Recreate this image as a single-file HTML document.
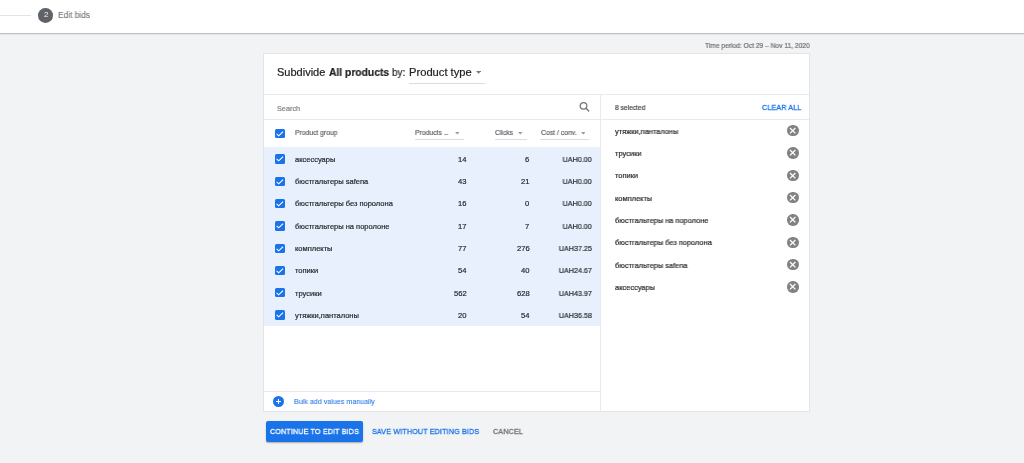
<!DOCTYPE html>
<html><head><meta charset="utf-8">
<style>
*{margin:0;padding:0;box-sizing:border-box}
html,body{width:1024px;height:463px;overflow:hidden}
body{background:#f1f3f4;font-family:"Liberation Sans",sans-serif;position:relative;color:#3c4043}
.a{position:absolute;white-space:nowrap;line-height:1;-webkit-text-stroke:0.2px currentColor}
.tx{will-change:transform}
.cb{width:9.6px;height:9.3px;background:#1a73e8;border-radius:1.5px}
.arr{width:0;height:0;border-left:2.5px solid transparent;border-right:2.5px solid transparent;border-top:2.5px solid #80868b}
.x{width:11.4px;height:11.4px;border-radius:50%;background:#828282}
</style></head><body>
<div class="a" style="left:0;top:0;width:1024px;height:33px;background:#fff"></div>
<div class="a" style="left:0;top:33px;width:1024px;height:1px;background:#bfc1c5"></div>
<div class="a" style="left:0;top:34px;width:1024px;height:1px;background:#e4e6e8"></div>
<div class="a" style="left:0;top:15px;width:31px;height:1px;background:#e1e3e6"></div>
<div class="a" style="left:38px;top:8px;width:14.6px;height:14.6px;border-radius:50%;background:#5f6368"></div>
<div class="a" style="left:263px;top:53px;width:547px;height:359px;background:#fff;border:1px solid #e2e4e7"></div>
<div class="a" style="left:264px;top:94px;width:545px;height:1px;background:#e8eaed"></div>
<div class="a" style="left:264px;top:119px;width:545px;height:1px;background:#e8eaed"></div>
<div class="a" style="left:600px;top:95px;width:1px;height:316px;background:#e8eaed"></div>
<div class="a" style="left:264px;top:391px;width:336px;height:1px;background:#e8eaed"></div>
<svg class="a" style="left:475.80px;top:70.80px" width="5.20" height="2.80" viewBox="0 0 5.20 2.80"><path d="M0 0 L5.20 0 L2.60 2.80 Z" fill="#777b80"/></svg>
<div class="a" style="left:409px;top:83px;width:76px;height:1px;background:#dadce0"></div>
<svg class="a" style="left:572px;top:96px" width="24" height="22" viewBox="0 0 24 22"><circle cx="11.5" cy="9.85" r="3.35" stroke="#72767b" stroke-width="1.25" fill="none"/><path d="M14 12.35 L16.7 15.05" stroke="#72767b" stroke-width="1.35" stroke-linecap="round"/></svg>
<div class="a cb" style="left:275px;top:128.6px"><svg width="9.6" height="9.4" viewBox="0 0 9.6 9.4" style="position:absolute;left:0;top:0"><path d="M1.6 4.85 L3.7 6.8 L8.1 2.55" stroke="#fff" stroke-width="1.1" fill="none"/></svg></div>
<svg class="a" style="left:455.30px;top:132.05px" width="4.60" height="2.50" viewBox="0 0 4.60 2.50"><path d="M0 0 L4.60 0 L2.30 2.50 Z" fill="#989ca1"/></svg>
<div class="a" style="left:415px;top:139px;width:49px;height:1px;background:#dadce0"></div>
<svg class="a" style="left:518.10px;top:132.05px" width="4.60" height="2.50" viewBox="0 0 4.60 2.50"><path d="M0 0 L4.60 0 L2.30 2.50 Z" fill="#989ca1"/></svg>
<div class="a" style="left:495px;top:139px;width:32px;height:1px;background:#dadce0"></div>
<svg class="a" style="left:580.50px;top:132.05px" width="4.60" height="2.50" viewBox="0 0 4.60 2.50"><path d="M0 0 L4.60 0 L2.30 2.50 Z" fill="#989ca1"/></svg>
<div class="a" style="left:540px;top:139px;width:49px;height:1px;background:#dadce0"></div>
<div class="a" style="left:264px;top:147px;width:336px;height:178.6px;background:#e8f0fe"></div>
<div class="a cb" style="left:275px;top:154.30px"><svg width="9.6" height="9.4" viewBox="0 0 9.6 9.4" style="position:absolute;left:0;top:0"><path d="M1.6 4.85 L3.7 6.8 L8.1 2.55" stroke="#fff" stroke-width="1.1" fill="none"/></svg></div>
<div class="a cb" style="left:275px;top:176.61px"><svg width="9.6" height="9.4" viewBox="0 0 9.6 9.4" style="position:absolute;left:0;top:0"><path d="M1.6 4.85 L3.7 6.8 L8.1 2.55" stroke="#fff" stroke-width="1.1" fill="none"/></svg></div>
<div class="a cb" style="left:275px;top:198.92px"><svg width="9.6" height="9.4" viewBox="0 0 9.6 9.4" style="position:absolute;left:0;top:0"><path d="M1.6 4.85 L3.7 6.8 L8.1 2.55" stroke="#fff" stroke-width="1.1" fill="none"/></svg></div>
<div class="a cb" style="left:275px;top:221.23px"><svg width="9.6" height="9.4" viewBox="0 0 9.6 9.4" style="position:absolute;left:0;top:0"><path d="M1.6 4.85 L3.7 6.8 L8.1 2.55" stroke="#fff" stroke-width="1.1" fill="none"/></svg></div>
<div class="a cb" style="left:275px;top:243.54px"><svg width="9.6" height="9.4" viewBox="0 0 9.6 9.4" style="position:absolute;left:0;top:0"><path d="M1.6 4.85 L3.7 6.8 L8.1 2.55" stroke="#fff" stroke-width="1.1" fill="none"/></svg></div>
<div class="a cb" style="left:275px;top:265.85px"><svg width="9.6" height="9.4" viewBox="0 0 9.6 9.4" style="position:absolute;left:0;top:0"><path d="M1.6 4.85 L3.7 6.8 L8.1 2.55" stroke="#fff" stroke-width="1.1" fill="none"/></svg></div>
<div class="a cb" style="left:275px;top:288.16px"><svg width="9.6" height="9.4" viewBox="0 0 9.6 9.4" style="position:absolute;left:0;top:0"><path d="M1.6 4.85 L3.7 6.8 L8.1 2.55" stroke="#fff" stroke-width="1.1" fill="none"/></svg></div>
<div class="a cb" style="left:275px;top:310.47px"><svg width="9.6" height="9.4" viewBox="0 0 9.6 9.4" style="position:absolute;left:0;top:0"><path d="M1.6 4.85 L3.7 6.8 L8.1 2.55" stroke="#fff" stroke-width="1.1" fill="none"/></svg></div>
<div class="a x" style="left:787.4px;top:125.10px"><svg width="11.4" height="11.4" viewBox="0 0 11.4 11.4" style="position:absolute;left:0;top:0"><path d="M3.0 3.0 L8.4 8.4 M8.4 3.0 L3.0 8.4" stroke="#fff" stroke-width="1.25"/></svg></div>
<div class="a x" style="left:787.4px;top:147.41px"><svg width="11.4" height="11.4" viewBox="0 0 11.4 11.4" style="position:absolute;left:0;top:0"><path d="M3.0 3.0 L8.4 8.4 M8.4 3.0 L3.0 8.4" stroke="#fff" stroke-width="1.25"/></svg></div>
<div class="a x" style="left:787.4px;top:169.72px"><svg width="11.4" height="11.4" viewBox="0 0 11.4 11.4" style="position:absolute;left:0;top:0"><path d="M3.0 3.0 L8.4 8.4 M8.4 3.0 L3.0 8.4" stroke="#fff" stroke-width="1.25"/></svg></div>
<div class="a x" style="left:787.4px;top:192.03px"><svg width="11.4" height="11.4" viewBox="0 0 11.4 11.4" style="position:absolute;left:0;top:0"><path d="M3.0 3.0 L8.4 8.4 M8.4 3.0 L3.0 8.4" stroke="#fff" stroke-width="1.25"/></svg></div>
<div class="a x" style="left:787.4px;top:214.34px"><svg width="11.4" height="11.4" viewBox="0 0 11.4 11.4" style="position:absolute;left:0;top:0"><path d="M3.0 3.0 L8.4 8.4 M8.4 3.0 L3.0 8.4" stroke="#fff" stroke-width="1.25"/></svg></div>
<div class="a x" style="left:787.4px;top:236.65px"><svg width="11.4" height="11.4" viewBox="0 0 11.4 11.4" style="position:absolute;left:0;top:0"><path d="M3.0 3.0 L8.4 8.4 M8.4 3.0 L3.0 8.4" stroke="#fff" stroke-width="1.25"/></svg></div>
<div class="a x" style="left:787.4px;top:258.96px"><svg width="11.4" height="11.4" viewBox="0 0 11.4 11.4" style="position:absolute;left:0;top:0"><path d="M3.0 3.0 L8.4 8.4 M8.4 3.0 L3.0 8.4" stroke="#fff" stroke-width="1.25"/></svg></div>
<div class="a x" style="left:787.4px;top:281.27px"><svg width="11.4" height="11.4" viewBox="0 0 11.4 11.4" style="position:absolute;left:0;top:0"><path d="M3.0 3.0 L8.4 8.4 M8.4 3.0 L3.0 8.4" stroke="#fff" stroke-width="1.25"/></svg></div>
<div class="a" style="left:272.8px;top:395.9px;width:11.5px;height:11.5px;border-radius:50%;background:#1a73e8"></div>
<div class="a" style="left:275.95px;top:401.05px;width:5.2px;height:1.2px;background:#fff"></div>
<div class="a" style="left:277.95px;top:399.05px;width:1.2px;height:5.2px;background:#fff"></div>
<div class="a" style="left:265.5px;top:421.1px;width:97.4px;height:20.9px;background:#1a73e8;border-radius:2px;box-shadow:0 1px 1.5px rgba(0,0,0,.3)"></div>
<div class="a tx" id="two" style="left:43.5px;top:10.9px;font-size:8px;color:#f4f4f4;-webkit-text-stroke:0">2</div>
<div class="a tx" id="edit" style="left:57.8px;top:11.2px;font-size:8.6px;color:#6f7378;-webkit-text-stroke:0.1px;transform:scaleX(0.97);transform-origin:0 0">Edit bids</div>
<div class="a tx" id="time" style="left:705px;top:41.6px;font-size:7px;color:#6b6f74;transform:scaleX(0.951);transform-origin:0 0">Time period: Oct 29 – Nov 11, 2020</div>
<div class="a tx" id="subdivide" style="left:276.8px;top:67px;font-size:10.8px;color:#202124;transform:scaleX(1.02);transform-origin:0 0">Subdivide</div>
<div class="a tx" id="all" style="left:329px;top:67px;font-size:10.8px;font-weight:bold;color:#202124;transform:scaleX(0.953);transform-origin:0 0">All products</div>
<div class="a tx" id="by" style="left:392px;top:67px;font-size:10.8px;color:#202124;transform:scaleX(0.92);transform-origin:0 0">by:</div>
<div class="a tx" id="ptype" style="left:408.8px;top:67px;font-size:10.8px;color:#202124;transform:scaleX(1.035);transform-origin:0 0">Product type</div>
<div class="a tx" id="search" style="left:277.3px;top:104.5px;font-size:7.3px;color:#80868b;transform:scaleX(1.0);transform-origin:0 0">Search</div>
<div class="a tx" id="sel8" style="left:614.8px;top:103.6px;font-size:7.2px;color:#3c4043;transform:scaleX(0.925);transform-origin:0 0">8 selected</div>
<div class="a tx" id="clear" style="left:762px;top:103.8px;font-size:7.6px;color:#1a73e8;-webkit-text-stroke:0.3px;letter-spacing:0.15px;transform:scaleX(0.94);transform-origin:0 0">CLEAR ALL</div>
<div class="a tx" id="pg" style="left:295px;top:129.3px;font-size:7.2px;color:#5f6368;transform:scaleX(0.94);transform-origin:0 0">Product group</div>
<div class="a tx" id="prodh" style="left:415px;top:129.4px;font-size:7.2px;color:#5f6368;transform:scaleX(0.95);transform-origin:0 0">Products <span style="letter-spacing:-.6px">...</span></div>
<div class="a tx" id="clicksh" style="left:495px;top:129.4px;font-size:7.2px;color:#5f6368;transform:scaleX(0.94);transform-origin:0 0">Clicks</div>
<div class="a tx" id="costh" style="left:541px;top:129.4px;font-size:7.2px;color:#5f6368;transform:scaleX(0.955);transform-origin:0 0">Cost / conv.</div>
<div class="a tx" id="r0" style="left:295px;top:155.7px;font-size:7.5px;color:#26292d">аксессуары</div>
<div class="a tx" id="n0" style="top:155.7px;font-size:7.6px;color:#26292d;right:557.50px">14</div>
<div class="a tx" id="c0" style="top:155.7px;font-size:7.6px;color:#26292d;right:494.70px">6</div>
<div class="a tx" id="u0" style="top:155.7px;font-size:7.6px;color:#26292d;right:432.20px;transform:scaleX(0.95);transform-origin:100% 0">UAH0.00</div>
<div class="a tx" id="r1" style="left:295px;top:178.01px;font-size:7.5px;color:#26292d">бюстгальтеры safena</div>
<div class="a tx" id="n1" style="top:178.01px;font-size:7.6px;color:#26292d;right:557.50px">43</div>
<div class="a tx" id="c1" style="top:178.01px;font-size:7.6px;color:#26292d;right:494.70px">21</div>
<div class="a tx" id="u1" style="top:178.01px;font-size:7.6px;color:#26292d;right:432.20px;transform:scaleX(0.95);transform-origin:100% 0">UAH0.00</div>
<div class="a tx" id="r2" style="left:295px;top:200.32px;font-size:7.5px;color:#26292d">бюстгальтеры без поролона</div>
<div class="a tx" id="n2" style="top:200.32px;font-size:7.6px;color:#26292d;right:557.50px">16</div>
<div class="a tx" id="c2" style="top:200.32px;font-size:7.6px;color:#26292d;right:494.70px">0</div>
<div class="a tx" id="u2" style="top:200.32px;font-size:7.6px;color:#26292d;right:432.20px;transform:scaleX(0.95);transform-origin:100% 0">UAH0.00</div>
<div class="a tx" id="r3" style="left:295px;top:222.63px;font-size:7.5px;color:#26292d">бюстгальтеры на поролоне</div>
<div class="a tx" id="n3" style="top:222.63px;font-size:7.6px;color:#26292d;right:557.50px">17</div>
<div class="a tx" id="c3" style="top:222.63px;font-size:7.6px;color:#26292d;right:494.70px">7</div>
<div class="a tx" id="u3" style="top:222.63px;font-size:7.6px;color:#26292d;right:432.20px;transform:scaleX(0.95);transform-origin:100% 0">UAH0.00</div>
<div class="a tx" id="r4" style="left:295px;top:244.94px;font-size:7.5px;color:#26292d">комплекты</div>
<div class="a tx" id="n4" style="top:244.94px;font-size:7.6px;color:#26292d;right:557.50px">77</div>
<div class="a tx" id="c4" style="top:244.94px;font-size:7.6px;color:#26292d;right:494.70px">276</div>
<div class="a tx" id="u4" style="top:244.94px;font-size:7.6px;color:#26292d;right:432.20px;transform:scaleX(0.95);transform-origin:100% 0">UAH37.25</div>
<div class="a tx" id="r5" style="left:295px;top:267.25px;font-size:7.5px;color:#26292d">топики</div>
<div class="a tx" id="n5" style="top:267.25px;font-size:7.6px;color:#26292d;right:557.50px">54</div>
<div class="a tx" id="c5" style="top:267.25px;font-size:7.6px;color:#26292d;right:494.70px">40</div>
<div class="a tx" id="u5" style="top:267.25px;font-size:7.6px;color:#26292d;right:432.20px;transform:scaleX(0.95);transform-origin:100% 0">UAH24.67</div>
<div class="a tx" id="r6" style="left:295px;top:289.56px;font-size:7.5px;color:#26292d">трусики</div>
<div class="a tx" id="n6" style="top:289.56px;font-size:7.6px;color:#26292d;right:557.50px">562</div>
<div class="a tx" id="c6" style="top:289.56px;font-size:7.6px;color:#26292d;right:494.70px">628</div>
<div class="a tx" id="u6" style="top:289.56px;font-size:7.6px;color:#26292d;right:432.20px;transform:scaleX(0.95);transform-origin:100% 0">UAH43.97</div>
<div class="a tx" id="r7" style="left:295px;top:311.86999999999995px;font-size:7.5px;color:#26292d">утяжки,панталоны</div>
<div class="a tx" id="n7" style="top:311.86999999999995px;font-size:7.6px;color:#26292d;right:557.50px">20</div>
<div class="a tx" id="c7" style="top:311.86999999999995px;font-size:7.6px;color:#26292d;right:494.70px">54</div>
<div class="a tx" id="u7" style="top:311.86999999999995px;font-size:7.6px;color:#26292d;right:432.20px;transform:scaleX(0.95);transform-origin:100% 0">UAH36.58</div>
<div class="a tx" id="s0" style="left:614.6px;top:127.8px;font-size:7.5px;color:#26292d;transform:scaleX(0.99);transform-origin:0 0">утяжки,панталоны</div>
<div class="a tx" id="s1" style="left:614.6px;top:150.11px;font-size:7.5px;color:#26292d;transform:scaleX(0.99);transform-origin:0 0">трусики</div>
<div class="a tx" id="s2" style="left:614.6px;top:172.42000000000002px;font-size:7.5px;color:#26292d;transform:scaleX(0.99);transform-origin:0 0">топики</div>
<div class="a tx" id="s3" style="left:614.6px;top:194.73000000000002px;font-size:7.5px;color:#26292d;transform:scaleX(0.99);transform-origin:0 0">комплекты</div>
<div class="a tx" id="s4" style="left:614.6px;top:217.04000000000002px;font-size:7.5px;color:#26292d;transform:scaleX(0.99);transform-origin:0 0">бюстгальтеры на поролоне</div>
<div class="a tx" id="s5" style="left:614.6px;top:239.35000000000002px;font-size:7.5px;color:#26292d;transform:scaleX(0.99);transform-origin:0 0">бюстгальтеры без поролона</div>
<div class="a tx" id="s6" style="left:614.6px;top:261.65999999999997px;font-size:7.5px;color:#26292d;transform:scaleX(0.99);transform-origin:0 0">бюстгальтеры safena</div>
<div class="a tx" id="s7" style="left:614.6px;top:283.96999999999997px;font-size:7.5px;color:#26292d;transform:scaleX(0.99);transform-origin:0 0">аксессуары</div>
<div class="a tx" id="bulk" style="left:294.2px;top:397.6px;font-size:7.4px;color:#1a73e8;-webkit-text-stroke:0.05px;transform:scaleX(0.965);transform-origin:0 0">Bulk add values manually</div>
<div class="a tx" id="cont" style="left:270px;top:427.5px;font-size:7.8px;color:#fff;-webkit-text-stroke:0.3px;letter-spacing:0.15px;transform:scaleX(0.92);transform-origin:0 0">CONTINUE TO EDIT BIDS</div>
<div class="a tx" id="save" style="left:371.8px;top:427.5px;font-size:7.8px;color:#1a73e8;-webkit-text-stroke:0.3px;letter-spacing:0.15px;transform:scaleX(0.92);transform-origin:0 0">SAVE WITHOUT EDITING BIDS</div>
<div class="a tx" id="cancel" style="left:493px;top:427.5px;font-size:7.8px;color:#6b6f74;-webkit-text-stroke:0.3px;letter-spacing:0.15px;transform:scaleX(0.92);transform-origin:0 0">CANCEL</div>
</body></html>
